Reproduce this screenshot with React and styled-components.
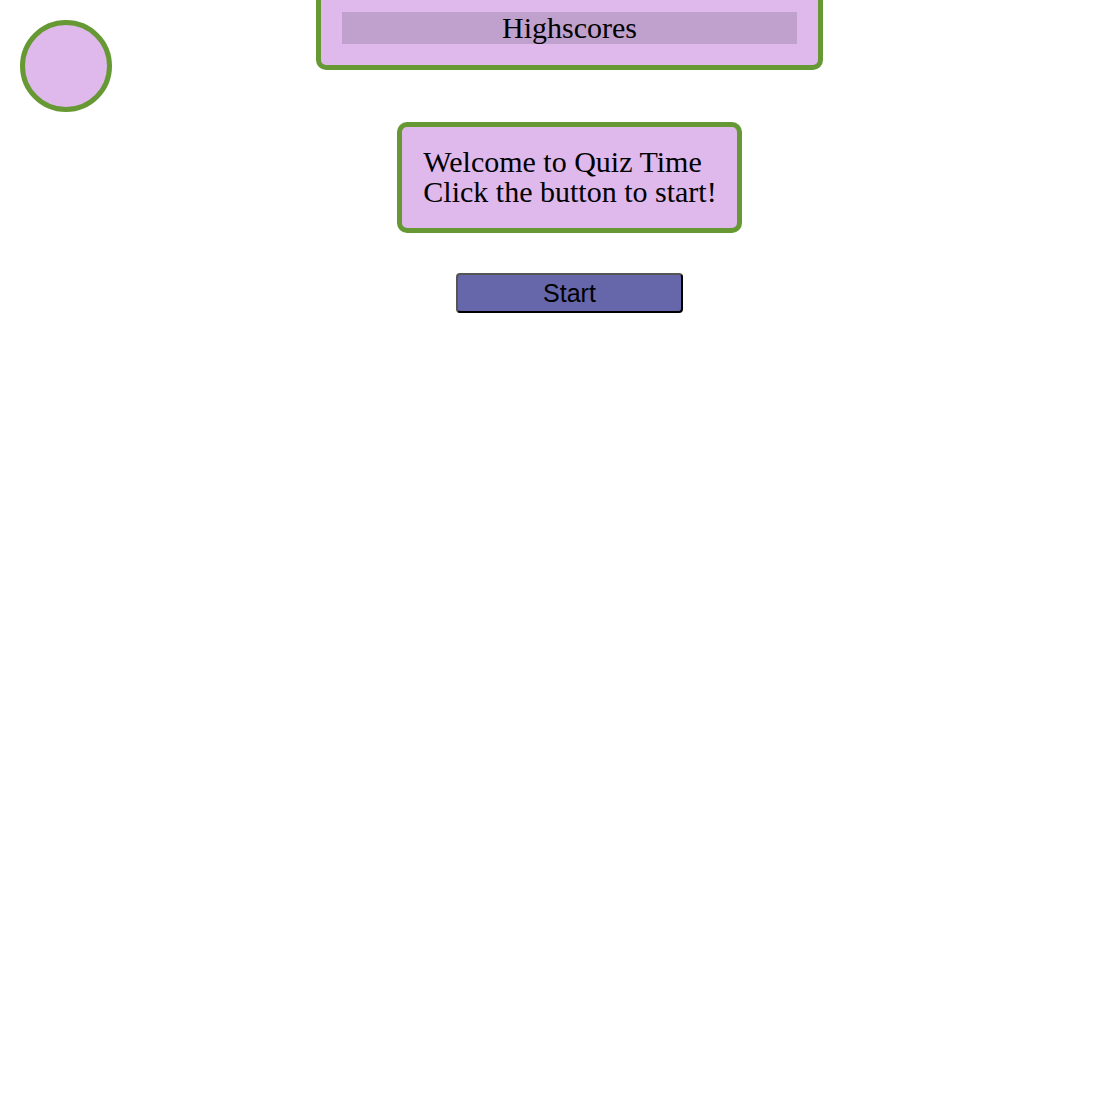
import React from "react";
import styled, { createGlobalStyle } from "styled-components";

const Global = createGlobalStyle`
  body {
    margin: 0;
    background: #ffffff;
    font-family: "Liberation Serif", "Times New Roman", serif;
  }
`;

const Page = styled.div`
  display: grid;
  grid-template-columns: 1fr;
  min-height: 1113px;
`;

const Avatar = styled.div`
  position: absolute;
  top: 20px;
  left: 20px;
  width: 82px;
  height: 82px;
  border-radius: 50%;
  border: 5px solid #669933;
  background: #dfb8ec;
`;

const Main = styled.main`
  display: flex;
  flex-direction: column;
  align-items: center;
  padding-left: 21px;
`;

const ScorePanel = styled.section`
  box-sizing: border-box;
  width: 507px;
  margin-top: -14px;
  padding: 21px;
  border: 5px solid #669933;
  border-radius: 10px;
  background: #dfb8ec;
`;

const ScoreTitle = styled.div`
  height: 32px;
  line-height: 32px;
  background: #c0a0cc;
  text-align: center;
  font-size: 30px;
  color: #000;
`;

const WelcomeCard = styled.div`
  margin-top: 52px;
  padding: 20px 20px 21px 21px;
  border: 5px solid #669933;
  border-radius: 10px;
  background: #dfb8ec;
  font-size: 30px;
  line-height: 30px;
  color: #000;
`;

const StartButton = styled.button`
  box-sizing: border-box;
  margin-top: 40px;
  width: 227px;
  height: 40px;
  border: 2px solid;
  border-color: #555555 #000000 #000000 #555555;
  border-radius: 4px;
  background: #6666aa;
  font-family: "Liberation Sans", Arial, sans-serif;
  font-size: 25px;
  color: #000;
  padding: 0;
  line-height: 36px;
`;

function App() {
  return (
    <Page>
      <Global />
      <Avatar />
      <Main>
        <ScorePanel>
          <ScoreTitle>Highscores</ScoreTitle>
        </ScorePanel>
        <WelcomeCard>
          <div>Welcome to Quiz Time</div>
          <div>Click the button to start!</div>
        </WelcomeCard>
        <StartButton>Start</StartButton>
      </Main>
    </Page>
  );
}

export default App;
